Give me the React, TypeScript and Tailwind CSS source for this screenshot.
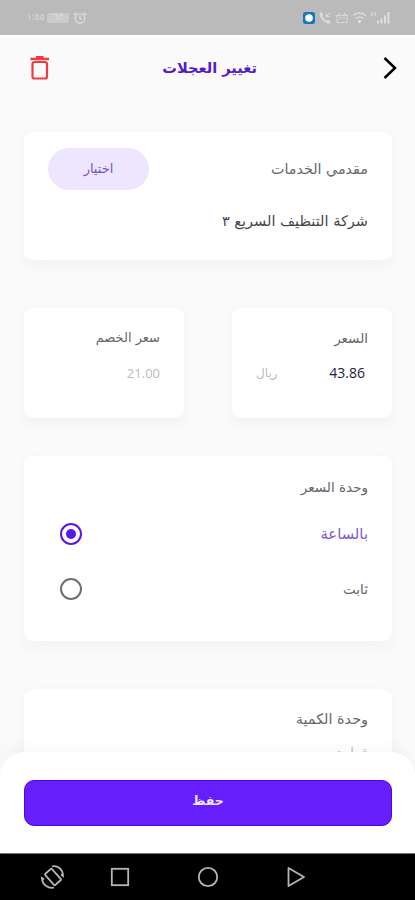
import { ReactNode, useState } from "react";

type cardProps = {
  className?: string;
  children: ReactNode;
};

const Card = ({ className = "", children }: cardProps) => (
  <section
    className={`rounded-[9px] bg-white shadow-[0_5px_14px_rgba(60,90,80,0.055)] ${className}`}
  >
    {children}
  </section>
);

const StatusBar = () => (
  <div
    dir="ltr"
    className="flex h-[35px] shrink-0 items-center justify-between bg-[#bababa] pr-[25px] pl-[27px] text-[#dedede]"
  >
    <div className="flex items-center gap-1">
      <span className="w-[16px] text-[9px] leading-none whitespace-nowrap">١:٥٥</span>
      <span className="flex h-[10px] w-[22px] items-center justify-center rounded-[2px] bg-[#cbcbcb] text-[9px] leading-none">
        ٦٣
      </span>
      <svg width="14" height="14" viewBox="0 0 14 14" fill="none" stroke="currentColor" strokeWidth="1.3">
        <circle cx="7" cy="7.5" r="4.7" />
        <path d="M7 4.8v3h2M1 4l2.6-2.4M13 4l-2.6-2.4" />
      </svg>
    </div>
    <div className="flex items-center gap-[4px]">
      <svg width="12" height="12" viewBox="0 0 12 12">
        <rect width="12" height="12" rx="2.5" fill="#1878bd" />
        <circle cx="6" cy="6" r="3.8" fill="#fff" />
      </svg>
      <svg width="13" height="13" viewBox="0 0 13 13" fill="none" stroke="currentColor" strokeWidth="1.5">
        <path d="M2 1.5c-1.5 4 4 10.5 9 10M2 2l1.5 2.5M8.5 9.5l2.5 1.5" strokeWidth="2" />
        <path d="M11.5 1.5L7.5 5.5M7.5 2.5v3h3" strokeWidth="1" />
      </svg>
      <svg width="12" height="12" viewBox="0 0 12 12" fill="none" stroke="currentColor" strokeWidth="1.2">
        <path d="M1 3.5h10v7H1zM3 1v2.5M9 1v2.5M3 6h2M7 6h2" strokeDasharray="3 1" />
      </svg>
      <svg width="15" height="13" viewBox="0 0 15 13" fill="none" stroke="currentColor" strokeWidth="1.5">
        <path d="M1 4.5q6.5-5 13 0M3.5 7.5q4-3 8 0" />
        <circle cx="7.5" cy="10.5" r="1" fill="currentColor" />
      </svg>
      <svg width="19" height="13" viewBox="0 0 19 13" stroke="currentColor" strokeWidth="2">
        <path d="M7 12.5v-3M10.5 12.5v-5M14 12.5v-8M17.5 12.5V1" />
        <path d="M1 1v4M4 1v4" strokeWidth="1.2" />
      </svg>
    </div>
  </div>
);

const Header = () => (
  <header className="flex h-[64px] shrink-0 items-center border-t-2 border-white pr-[17px] pl-[30px]">
    <button aria-label="رجوع">
      <svg width="16" height="24" viewBox="0 0 16 24" fill="none" stroke="#000" strokeWidth="2.5">
        <path d="M2.5 2l10.5 10L2.5 22" />
      </svg>
    </button>
    <h1 className="mr-[125px] text-[14.6px] leading-6 font-bold whitespace-nowrap text-[#541bc9]">تغيير العجلات</h1>
    <button aria-label="حذف" className="mr-auto">
      <svg width="20" height="26" viewBox="0 0 20 26" fill="none" stroke="#ef3b3f">
        <path d="M.5 4h18.5" strokeWidth="2.5" />
        <path d="M6 2h7.5" strokeWidth="2" />
        <rect x="2.5" y="7" width="14.5" height="16.500" rx="2" strokeWidth="2.2" />
      </svg>
    </button>
  </header>
);

const UNITS = [
  { label: "بالساعة", size: "text-[14.8px]" },
  { label: "ثابت", size: "text-[13.5px]" },
];

const NavBar = () => (
  <nav dir="ltr" className="flex h-[46px] shrink-0 items-center bg-black pl-[40px] text-[#b5b5b5]">
    <svg width="26" height="26" viewBox="0 0 26 26" fill="none" stroke="currentColor" strokeWidth="1.8">
      <rect x="8.5" y="5.5" width="9" height="15" rx="1" transform="rotate(-42 13 13)" />
      <path d="M12 2.500C17 1 23 5 23 12l-2-1.500M14 23.500C9 25 2 21 2 14l2 1.500" />
    </svg>
    <svg className="ml-[43px]" width="22" height="22" viewBox="0 0 22 22" fill="none" stroke="currentColor" strokeWidth="1.8">
      <rect x="2.8" y="2.8" width="16.4" height="16.4" />
    </svg>
    <svg className="ml-[66px]" width="22" height="22" viewBox="0 0 22 22" fill="none" stroke="currentColor" strokeWidth="1.8">
      <circle cx="11" cy="11" r="9.2" />
    </svg>
    <svg className="ml-[67px]" width="20" height="22" viewBox="0 0 20 22" fill="none" stroke="currentColor" strokeWidth="1.8" strokeLinejoin="round">
      <path d="M2.5 2v18L18 11z" />
    </svg>
  </nav>
);

export default function App() {
  const [unit, setUnit] = useState(0);

  return (
    <div
      dir="rtl"
      className="flex h-[900px] w-[415px] flex-col overflow-hidden bg-[#fafafa] font-['DejaVu_Sans',sans-serif] text-[#66666b]"
    >
      <StatusBar />
      <Header />

      <main className="min-h-0 flex-1 overflow-hidden pt-[33px] pr-[23px] pl-[24px] text-[13.5px] leading-5">
        <Card className="h-[128px] px-[24px] pt-[16px]">
          <div className="flex items-center justify-between">
            <h2 className="text-[14.3px]">مقدمي الخدمات</h2>
            <button className="h-[42px] w-[101px] rounded-full bg-[#eee6ff] text-[13px] text-[#7952c4]">
              اختيار
            </button>
          </div>
          <p className="mt-[21px] text-[14.5px] whitespace-nowrap text-[#45454b]">شركة التنظيف السريع ٣</p>
        </Card>

        <div className="mt-[48px] flex gap-[48px]">
          <Card className="h-[110px] flex-1 px-[24px] pt-[20px]">
            <h2>السعر</h2>
            <div className="mt-[15px] flex justify-between pr-[3px]">
              <span className="font-['Open_Sans','DejaVu_Sans',sans-serif] text-[14px] font-medium text-[#25213d]">43.86</span>
              <span className="text-[12px] text-[#bcbcbc]">ريال</span>
            </div>
          </Card>
          <Card className="h-[110px] flex-1 px-[24px] pt-[20px]">
            <h2 className="text-[13px]">سعر الخصم</h2>
            <p className="mt-[15px] font-['Open_Sans','DejaVu_Sans',sans-serif] text-[13px] text-[#bcbcbc]">21.00</p>
          </Card>
        </div>

        <Card className="mt-[38px] h-[185px] px-[24px] pt-[21px]">
          <h2>وحدة السعر</h2>
          <div className="mt-[27px] flex flex-col gap-[35px] pl-[12px]">
            {UNITS.map((item, i) => (
              <button key={item.label} onClick={() => setUnit(i)} className="flex h-5 items-center justify-between">
                <span className={`${item.size} ${unit === i ? "text-[#8057cf]" : ""}`}>{item.label}</span>
                <span
                  className={`flex size-[22px] items-center justify-center rounded-full border-2 ${
                    unit === i ? "border-[#5b16ee]" : "border-[#707070]"
                  }`}
                >
                  {unit === i && <span className="size-[10px] rounded-full bg-[#5b16ee]" />}
                </span>
              </button>
            ))}
          </div>
        </Card>

        <Card className="mt-[48px] h-[110px] px-[24px] pt-[20px]">
          <h2 className="text-[14.4px]">وحدة الكمية</h2>
          <p className="mt-[14px] text-[14px] text-[#c4c4c4]">قطعة</p>
        </Card>
      </main>

      <footer className="relative -mt-[24px] h-[102px] shrink-0 rounded-t-[24px] border-b border-[#777] bg-white pt-[28px] pr-[23px] pl-[24px] shadow-[0_-4px_14px_rgba(60,90,80,0.05)]">
        <button className="flex h-[46px] w-full items-center justify-center rounded-[10px] border border-[#5005df] bg-[#661ffa] pb-[3px] text-[12.5px] font-bold text-[#eee5ff]">
          حفظ
        </button>
      </footer>
      <NavBar />
    </div>
  );
}
